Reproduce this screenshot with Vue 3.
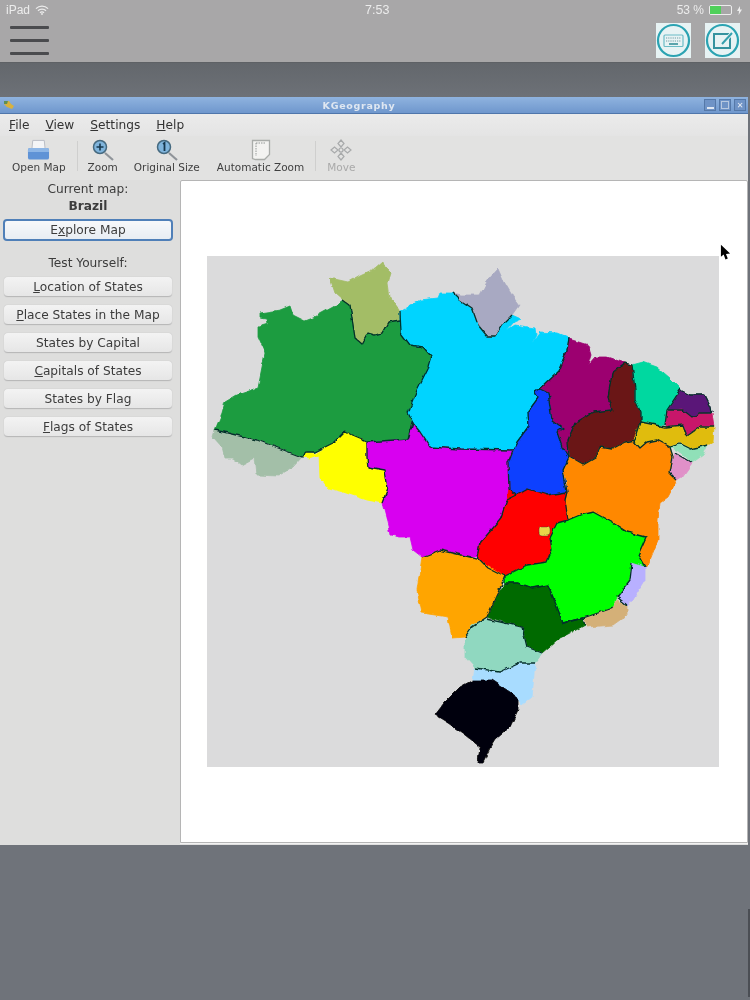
<template>
  <div class="screen">
    <!-- iPad top bar -->
    <header class="topbar">
      <div class="status">
        <span class="status-left">
          iPad
          <svg class="wifi" width="14" height="10" viewBox="0 0 14 10">
            <path d="M1 3.6a8.5 8.5 0 0 1 12 0M3 5.8a5.6 5.6 0 0 1 8 0M5 7.8a2.8 2.8 0 0 1 4 0" fill="none" stroke="#ececec" stroke-width="1.3" />
            <circle cx="7" cy="9" r="0.9" fill="#ececec" />
          </svg>
        </span>
        <span class="status-time">7:53</span>
        <span class="status-right">
          53 %
          <span class="battery"><span class="battery-level"></span></span>
          <svg width="5" height="9" viewBox="0 0 5 9"><path d="M3 0 0 5h2L1.6 9 5 3.6H3z" fill="#ececec" /></svg>
        </span>
      </div>
      <div class="actions">
        <div class="burger"><span></span><span></span><span></span></div>
        <div class="action-icons">
          <div class="action-icon">
            <svg width="35" height="35" viewBox="0 0 35 35">
              <circle cx="17.5" cy="17.5" r="15.5" fill="none" stroke="#2ba3b2" stroke-width="2.2" />
              <rect x="8" y="12" width="19" height="11.5" rx="1" fill="none" stroke="#6bbcc6" stroke-width="1.2" />
              <path d="M10 15h15M10 18h15" stroke="#6f9ca3" stroke-width="1.2" stroke-dasharray="1.2 1" />
              <path d="M13 21h9" stroke="#2c8a94" stroke-width="1.5" />
            </svg>
          </div>
          <div class="action-icon">
            <svg width="35" height="35" viewBox="0 0 35 35">
              <circle cx="17.5" cy="17.5" r="15.5" fill="none" stroke="#2ba3b2" stroke-width="2.2" />
              <rect x="9" y="11" width="16" height="14" fill="none" stroke="#35939f" stroke-width="2" />
              <path d="M17 21 28 9" stroke="#eaf5f6" stroke-width="4" />
              <path d="M17 21 27 10" stroke="#35a0ad" stroke-width="2" />
            </svg>
          </div>
        </div>
      </div>
    </header>

    <div class="band"></div>

    <!-- KGeography window -->
    <main class="window">
      <div class="titlebar">
        <svg class="app-logo" width="12" height="10" viewBox="0 0 12 10">
          <path d="M1 1h5l2 3 3 2-2 3-5-2-3-3z" fill="#d9b23d" />
          <path d="M1 1h4l-1 3-3 0z" fill="#5f8f55" />
        </svg>
        <span class="title-text">KGeography</span>
        <div class="win-buttons">
          <span class="win-btn"><i class="min"></i></span>
          <span class="win-btn"><i class="max"></i></span>
          <span class="win-btn close">&#10005;</span>
        </div>
      </div>

      <nav class="menubar">
        <span><u>F</u>ile</span>
        <span><u>V</u>iew</span>
        <span><u>S</u>ettings</span>
        <span><u>H</u>elp</span>
      </nav>

      <div class="toolbar">
        <div class="tool tool-open">
          <svg width="23" height="22" viewBox="0 0 24 22">
            <path d="M6 1h12l1 10H5z" fill="#f4f5f7" stroke="#b8bcc4" />
            <path d="M1 11q0-2 2-2h18q2 0 2 2v8q0 2-2 2H3q-2 0-2-2z" fill="#5f93d6" />
            <path d="M1 11q0-2 2-2h18q2 0 2 2v2H1z" fill="#8db6e6" />
          </svg>
          <span>Open Map</span>
        </div>
        <div class="tool-sep"></div>
        <div class="tool tool-zoom">
          <svg width="24" height="22" viewBox="0 0 24 22">
            <path d="M14 14l8 7" stroke="#8f9499" stroke-width="2.2" />
            <circle cx="9" cy="8" r="6.5" fill="#7fb4dc" stroke="#45697f" stroke-width="1.5" />
            <path d="M5.5 8h7M9 4.5v7" stroke="#17384f" stroke-width="1.6" />
          </svg>
          <span>Zoom</span>
        </div>
        <div class="tool tool-orig">
          <svg width="24" height="22" viewBox="0 0 24 22">
            <path d="M14 14l8 7" stroke="#8f9499" stroke-width="2.2" />
            <circle cx="9" cy="8" r="6.5" fill="#7fb4dc" stroke="#45697f" stroke-width="1.5" />
            <path d="M8 5l1.5-1v8" fill="none" stroke="#17384f" stroke-width="1.8" />
          </svg>
          <span>Original Size</span>
        </div>
        <div class="tool tool-auto">
          <svg width="20" height="22" viewBox="0 0 20 22">
            <path d="M1.500 1.500h17v14l-5 5h-9l-3-1z" fill="#f3f3f1" stroke="#a9aca9" stroke-width="1.300" />
            <path d="M5 4v13M5 4h9" stroke="#8b8e8d" stroke-width="0.900" stroke-dasharray="1.500 1" />
          </svg>
          <span>Automatic Zoom</span>
        </div>
        <div class="tool-sep tool-sep-last"></div>
        <div class="tool tool-move disabled">
          <svg width="22" height="22" viewBox="0 0 22 22">
            <g fill="none" stroke="#a8aaab" stroke-width="1.200">
              <path d="M11 1l3 3.500-3 3.500-3-3.500zM11 14l3 3.500-3 3.500-3-3.500zM1 11l3.500-3 3.500 3-3.500 3zM14 11l3.500-3 3.500 3-3.500 3z" />
              <circle cx="11" cy="11" r="2" />
            </g>
          </svg>
          <span>Move</span>
        </div>
      </div>

      <div class="content">
        <aside class="sidebar">
          <div class="label">Current map:</div>
          <div class="map-name">Brazil</div>
          <button class="btn btn-active">E<u>x</u>plore Map</button>
          <div class="label test-label">Test Yourself:</div>
          <div class="test-list">
            <button class="btn"><u>L</u>ocation of States</button>
            <button class="btn"><u>P</u>lace States in the Map</button>
            <button class="btn">States by Capital</button>
            <button class="btn"><u>C</u>apitals of States</button>
            <button class="btn">States by Flag</button>
            <button class="btn"><u>F</u>lags of States</button>
          </div>
        </aside>

        <section class="canvas">
          <svg class="map" width="512" height="511" viewBox="207 256 512 511">
            <defs>
              <filter id="rough" x="-5%" y="-5%" width="110%" height="110%">
                <feTurbulence type="fractalNoise" baseFrequency="0.12" numOctaves="2" seed="4" result="noise" />
                <feDisplacementMap in="SourceGraphic" in2="noise" scale="4.5" xChannelSelector="R" yChannelSelector="G" />
                <feGaussianBlur stdDeviation="0.5" />
              </filter>
            </defs>
            <g filter="url(#rough)">
              <polygon v-for="s in states" :key="s.name" :points="s.pts" :fill="s.color" :stroke="s.color" stroke-width="0.8" stroke-linejoin="round" />
              <rect x="539" y="527" width="11" height="8" rx="3" fill="#e8d648" stroke="#333" stroke-width="0.4" />
              <polyline v-for="(b, i) in borders" :key="i" :points="b" fill="none" stroke="#06302a" stroke-width="1.300" stroke-linejoin="round" />
            </g>
          </svg>
          <svg class="cursor" width="11" height="19" viewBox="0 0 12 19">
            <path d="M1 0 1 13 4 10.500 6 16 8.500 15 6.500 10 11 9.500z" fill="#000" />
          </svg>
        </section>
      </div>
    </main>

    <div class="edge-strip"></div>
  </div>
</template>

<script setup>
const states = [
  { name: 'Roraima', color: '#a3bd66', pts: '330,278 348,282 360,275 375,268 383,261 385,267 391,273 388,283 390,297 399,310 400,320 388,322 382,333 375,335 368,333 362,344 355,338 352,310 343,300 335,293' },
  { name: 'Amazonas', color: '#1b9c40', pts: '260,313 280,310 290,306 293,315 305,321 313,318 333,307 343,300 350,305 355,338 362,344 368,333 375,335 382,333 388,322 400,320 401,333 410,345 423,347 431,356 427,370 417,390 408,413 413,423 408,439 367,442 355,437 345,431 338,437 333,443 315,452 307,452 302,457 257,440 215,430 222,413 225,402 237,395 258,388 265,353 258,337 258,326 268,323 267,319 260,318' },
  { name: 'Acre', color: '#a3bfa8', pts: '215,430 257,440 302,457 293,467 278,476 257,475 255,458 242,465 233,458 225,458 222,447 213,437' },
  { name: 'Rondonia', color: '#ffff00', pts: '303,457 307,452 315,454 333,443 345,431 355,437 367,442 367,457 368,468 385,471 388,488 382,503 367,500 343,492 328,488 320,477 319,455 310,458' },
  { name: 'Para', color: '#00d4ff', pts: '400,312 420,300 438,298 440,293 453,293 460,300 472,308 478,325 487,336 495,336 502,325 512,315 521,319 514,322 507,330 515,325 535,328 536,335 532,343 540,332 557,333 569,338 567,350 558,372 540,389 535,392 538,398 527,413 528,427 517,442 513,450 460,449 430,447 420,432 412,422 408,413 417,390 427,370 431,356 423,347 410,345 401,333 400,320' },
  { name: 'Amapa', color: '#a8a9c2', pts: '453,293 460,295 480,295 488,280 498,269 503,280 513,297 519,305 512,315 502,325 495,336 487,336 478,325 472,308 460,300' },
  { name: 'Maranhao', color: '#9c0070', pts: '569,339 588,345 591,355 588,365 595,357 607,357 625,363 612,373 608,397 612,410 593,412 575,423 568,440 569,457 562,447 557,432 563,428 552,420 548,393 540,389 558,372 567,350' },
  { name: 'Piaui', color: '#6b1414', pts: '625,363 632,365 635,390 635,400 641,413 641,422 635,440 625,442 612,449 600,447 595,458 583,465 570,457 568,440 575,423 593,412 612,410 608,397 612,373' },
  { name: 'Ceara', color: '#00d8a0', pts: '632,365 643,362 657,367 670,378 681,389 667,410 665,425 658,425 642,422 641,413 635,400 635,390' },
  { name: 'RioGrandeNorte', color: '#5a1678', pts: '680,390 690,395 705,395 711,407 712,413 700,413 692,417 683,410 668,410' },
  { name: 'Paraiba', color: '#c8186a', pts: '667,411 682,409 692,417 700,413 712,414 714,427 700,427 687,436 683,427 665,427' },
  { name: 'Pernambuco', color: '#e0bc10', pts: '642,422 665,427 683,425 687,436 700,427 714,427 713,442 708,445 690,449 680,443 670,447 657,440 647,442 640,448 633,440' },
  { name: 'Alagoas', color: '#90e0b8', pts: '670,447 680,444 690,449 708,445 703,455 692,463 682,453' },
  { name: 'Sergipe', color: '#e090c8', pts: '675,453 692,463 682,477 677,480 670,473 672,463' },
  { name: 'Bahia', color: '#ff8800', pts: '633,440 640,448 647,442 657,440 670,447 673,457 670,473 677,480 668,497 660,503 658,520 658,540 648,565 645,567 638,555 646,537 627,532 613,523 593,512 580,515 568,520 565,500 567,483 563,470 569,458 583,465 595,458 600,447 612,449 625,442' },
  { name: 'Tocantins', color: '#0a40ff', pts: '535,392 540,389 548,393 552,420 563,428 557,432 562,447 569,457 563,470 567,492 548,495 528,489 517,495 509,488 508,463 517,442 528,427 527,413 538,398' },
  { name: 'MatoGrosso', color: '#d800f0', pts: '367,442 408,439 412,422 420,432 430,447 460,449 513,450 508,463 509,488 517,495 507,500 500,520 480,543 477,557 470,557 440,550 422,557 413,550 410,537 400,537 390,535 388,525 382,503 388,488 385,471 368,468 367,457' },
  { name: 'Goias', color: '#ff0000', pts: '509,488 517,495 528,489 548,495 567,492 565,500 568,520 557,523 550,537 552,550 547,562 527,565 505,576 487,567 477,557 480,543 500,520 507,500' },
  { name: 'Minas', color: '#00ff00', pts: '557,523 568,520 580,515 593,512 613,523 627,532 646,537 638,555 645,567 632,565 630,580 617,597 613,608 583,618 563,623 557,607 548,585 532,588 518,583 505,583 505,576 527,565 547,562 552,550 550,537' },
  { name: 'EspiritoSanto', color: '#b8b0ff', pts: '632,563 645,567 645,580 633,600 627,605 617,597 630,580' },
  { name: 'RioJaneiro', color: '#d4b078', pts: '617,600 627,605 627,615 613,625 587,627 585,618 613,608' },
  { name: 'SaoPaulo', color: '#006a00', pts: '505,583 518,583 532,588 548,585 557,607 563,623 583,618 585,625 567,635 557,640 542,653 527,647 522,627 487,617 497,595' },
  { name: 'MatoGrossoSul', color: '#ffa500', pts: '440,550 470,557 477,559 505,576 497,595 487,617 472,627 465,637 452,638 448,617 422,613 417,590 422,557' },
  { name: 'Parana', color: '#90d8c0', pts: '487,619 522,627 527,647 542,653 535,663 520,663 500,672 475,668 465,657 465,640 472,625' },
  { name: 'SantaCatarina', color: '#a8dcff', pts: '475,668 500,672 520,663 535,663 532,697 522,705 517,698 500,687 473,680' },
  { name: 'RioGrandeSul', color: '#000008', pts: '473,680 492,680 510,692 518,698 518,710 510,727 495,740 490,748 483,762 478,762 480,747 465,735 448,723 435,715 445,702 460,687' }
]

// internal borders, drawn over the fills
const borders = [
  '215,430 257,440 302,457 307,452 315,452 333,443 345,431 355,437 367,442 408,439 413,423 408,413 417,390 427,370 431,356 423,347 410,345 401,333 400,312',
  '343,300 350,305 355,338 362,344 368,333 375,335 382,333 388,322 400,320',
  '367,442 367,457 368,468 385,471 388,488 382,503',
  '408,439 412,422 420,432 430,447 460,449 513,450',
  '453,293 460,300 472,308 478,325 487,336 495,336 502,325 512,315',
  '569,338 567,350 558,372 540,389 535,392 538,398 527,413 528,427 517,442 513,450 508,463 509,488 517,495 528,489 548,495 567,492',
  '540,389 548,393 552,420 563,428 557,432 562,447 569,457 563,470 567,492 565,500 568,520 557,523 550,537 552,550 547,562 527,565 505,576 487,567 477,557 480,543 500,520 507,500 517,495',
  '625,363 612,373 608,397 612,410 593,412 575,423 568,440 569,457 583,465 595,458 600,447 612,449 625,442 635,440 641,422 641,413 635,400 635,390 632,365 625,363',
  '641,422 665,427 683,425 687,436 700,427 714,427',
  '633,440 640,448 647,442 657,440 670,447 680,444 690,449 708,445',
  '681,389 667,410 665,425',
  '668,410 683,410 692,417 700,413 712,413',
  '680,390 690,395 705,395 711,407 712,413',
  '675,453 692,463',
  '670,447 673,457 670,473 677,480',
  '568,520 580,515 593,512 613,523 627,532 646,537 638,555 645,567',
  '632,563 630,580 617,597 627,605',
  '613,608 583,618 563,623 557,607 548,585 532,588 518,583 505,583 505,576',
  '505,576 497,595 487,617 472,627 465,637',
  '422,557 440,550 470,557 477,559',
  '487,619 522,627 527,647 542,653',
  '475,668 500,672 520,663 535,663',
  '563,623 583,618 585,625'
]
</script>

<style>
html,
body {
  margin: 0;
  background: #6f737a;
}
</style>

<style scoped>
.screen {
  position: relative;
  width: 750px;
  height: 1000px;
  overflow: hidden;
  background: #6f737a;
  font-family: "DejaVu Sans", sans-serif;
  color: #3a3a3a;
}

/* ===== TOP BAR ===== */
.topbar {
  height: 63px;
  box-sizing: border-box;
  background: #a8a7a8;
  border-bottom: 1px solid #5e6165;
  font-family: "Liberation Sans", sans-serif;
}

.band {
  height: 34px;
  background: linear-gradient(#63676c, #6d7177);
}

.status {
  position: relative;
  display: flex;
  justify-content: space-between;
  align-items: center;
  height: 20px;
  padding: 0 8px 0 6px;
  color: #ececec;
  font-size: 12px;
  filter: blur(0.35px);
}

.status-left,
.status-right {
  display: flex;
  align-items: center;
  gap: 5px;
}

.status-time {
  position: absolute;
  left: 365px;
  font-size: 12.5px;
}

.battery {
  display: block;
  width: 21px;
  height: 8px;
  border: 1px solid #ececec;
  border-radius: 2px;
}

.battery-level {
  display: block;
  width: 11px;
  height: 100%;
  background: #4fd05a;
}

.actions {
  display: flex;
  justify-content: space-between;
  padding: 3px 10px 0 10px;
  filter: blur(0.35px);
}

.burger {
  display: flex;
  flex-direction: column;
  gap: 10px;
  width: 39px;
  padding-top: 3px;
}

.burger span {
  display: block;
  height: 3px;
  background: #4a4b4e;
  border-radius: 1px;
}

.action-icons {
  display: flex;
  gap: 14px;
}

.action-icon {
  width: 35px;
  height: 35px;
  background: #e7f3f4;
}

/* ===== WINDOW ===== */
.window {
  width: 748px;
  height: 748px;
  display: flex;
  flex-direction: column;
  background: #dfdfdf;
  filter: blur(0.45px);
}

.titlebar {
  position: relative;
  flex: none;
  height: 17px;
  display: flex;
  align-items: center;
  justify-content: center;
  background: linear-gradient(#8fb3df, #6f97cd);
  border-bottom: 1px solid #4f76ab;
  box-sizing: border-box;
}

.app-logo {
  position: absolute;
  left: 3px;
  top: 3px;
}

.title-text {
  margin-right: 30px;
  color: #dfe7f1;
  font-size: 9.5px;
  font-weight: 700;
  letter-spacing: 0.7px;
}

.win-buttons {
  position: absolute;
  right: 2px;
  top: 2px;
  display: flex;
  gap: 3px;
}

.win-btn {
  width: 12px;
  height: 12px;
  display: flex;
  align-items: center;
  justify-content: center;
  background: #6f93c6;
  border: 1px solid #5578a8;
  box-sizing: border-box;
  color: #e9eef5;
  font-size: 8px;
  font-weight: 700;
}

.win-btn .min {
  width: 7px;
  height: 2px;
  margin-top: 5px;
  background: #dfe7f2;
}

.win-btn .max {
  width: 6px;
  height: 6px;
  border: 1px solid #b7c8e0;
}

.menubar {
  flex: none;
  height: 22px;
  display: flex;
  align-items: center;
  gap: 16px;
  padding-left: 9px;
  font-size: 12.2px;
  color: #333;
  background: linear-gradient(#ebebeb, #e4e4e4);
}

.toolbar {
  flex: none;
  height: 44px;
  display: flex;
  align-items: flex-start;
  background: #e2e2e1;
  font-size: 10.5px;
}

.tool {
  display: flex;
  flex-direction: column;
  align-items: center;
  color: #3f3f3f;
  height: 42px;
  line-height: 12px;
  white-space: nowrap;
}

.tool svg {
  display: block;
  margin-top: 3px;
}

.tool-open {
  margin-left: 12px;
}

.tool-zoom {
  margin-left: 10px;
}

.tool-orig {
  margin-left: 16px;
}

.tool-auto {
  margin-left: 17px;
}

.tool-move {
  margin-left: 11px;
}

.tool-sep {
  width: 1px;
  height: 30px;
  margin: 5px 0 0 11px;
  background: #cfcfce;
}

.tool.disabled {
  color: #a9a9a9;
}

.content {
  flex: 1;
  display: flex;
  min-height: 0;
}

.sidebar {
  flex: none;
  width: 180px;
  box-sizing: border-box;
  padding: 0 8px 0 4px;
  background: #dededd;
  font-size: 12.2px;
  color: #3c3c3c;
  text-align: center;
}

.label {
  line-height: 17px;
  margin-top: 1px;
}

.map-name {
  font-weight: 700;
  line-height: 15px;
  margin-top: 1px;
  margin-bottom: 5px;
}

.test-label {
  margin-top: 14px;
  margin-bottom: 5px;
}

.btn {
  display: block;
  width: 168px;
  height: 20px;
  padding: 0;
  font: inherit;
  color: #3c3c3c;
  background: linear-gradient(#f3f3f3, #e6e6e6);
  border: none;
  border-bottom: 1px solid #b9b9b9;
  border-radius: 4px;
  box-shadow: 0 0 1px #a9a9a9;
  white-space: nowrap;
}

.btn-active {
  width: 170px;
  height: 22px;
  margin-left: -1px;
  background: linear-gradient(#f7f8fa, #e8edf3);
  border: 2px solid #4f7fb8;
  box-shadow: none;
}

.test-list {
  display: flex;
  flex-direction: column;
  gap: 8px;
}

.canvas {
  position: relative;
  flex: 1;
  display: flex;
  align-items: center;
  justify-content: center;
  padding-right: 2px;
  margin-bottom: 2px;
  box-sizing: border-box;
  background: #fff;
  border: 1px solid #b5b5b5;
  border-radius: 2px 2px 0 0;
  box-shadow: 0 1px 0 #f2f2f2;
}

.map {
  display: block;
  background: #dbdbdc;
}

.cursor {
  position: absolute;
  left: 539px;
  top: 63px;
}

.edge-strip {
  position: absolute;
  right: 0;
  top: 909px;
  width: 2px;
  height: 88px;
  background: #4b4e54;
}
</style>
